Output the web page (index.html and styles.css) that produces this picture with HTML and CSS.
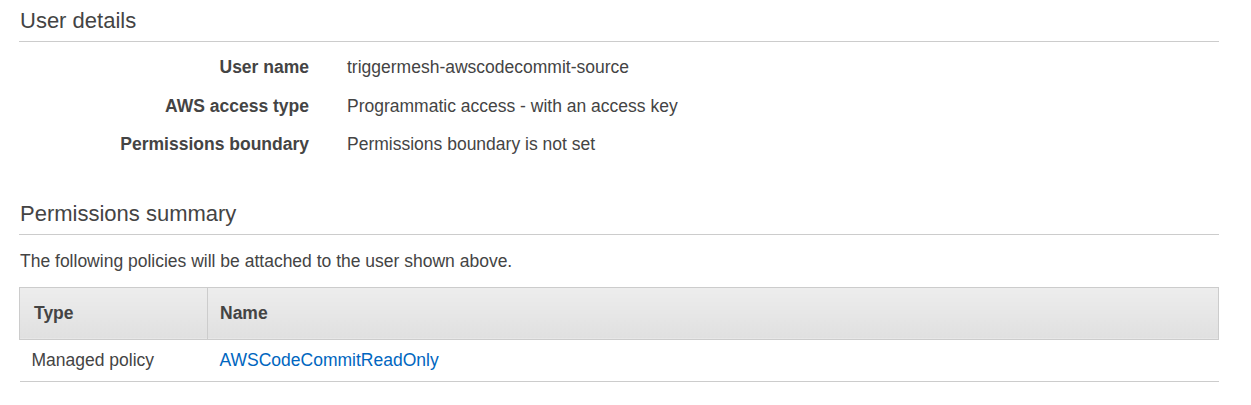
FILE: index.html
```html
<!DOCTYPE html>
<html lang="en">
<head>
<meta charset="utf-8">
<title>Review</title>
<link rel="stylesheet" href="styles.css">
</head>
<body>
<div class="page">
  <section class="section">
    <h2 class="section-title">User details</h2>
    <div class="details">
      <div class="detail-row">
        <div class="detail-label">User name</div>
        <div class="detail-value">triggermesh-awscodecommit-source</div>
      </div>
      <div class="detail-row">
        <div class="detail-label">AWS access type</div>
        <div class="detail-value">Programmatic access - with an access key</div>
      </div>
      <div class="detail-row">
        <div class="detail-label">Permissions boundary</div>
        <div class="detail-value">Permissions boundary is not set</div>
      </div>
    </div>
  </section>
  <section class="section section-summary">
    <h2 class="section-title">Permissions summary</h2>
    <p class="summary-text">The following policies will be attached to the user shown above.</p>
    <table class="policy-table">
      <thead>
        <tr>
          <th class="col-type">Type</th>
          <th class="col-name">Name</th>
        </tr>
      </thead>
      <tbody>
        <tr>
          <td class="col-type">Managed policy</td>
          <td class="col-name"><a class="policy-link" href="#">AWSCodeCommitReadOnly</a></td>
        </tr>
      </tbody>
    </table>
  </section>
</div>
</body>
</html>
```

FILE: styles.css
```css
* { box-sizing: border-box; }

html, body {
  margin: 0;
  padding: 0;
  background: #ffffff;
}

body {
  font-family: "Liberation Sans", Arial, sans-serif;
  font-size: 17.5px;
  color: #444444;
}

.page {
  padding: 0 32px 0 19px;
}

.section-title {
  margin: 0;
  padding: 7px 0 6px 1px;
  font-size: 22px;
  font-weight: normal;
  line-height: 28px;
  color: #444444;
  border-bottom: 1px solid #cccccc;
}

.details {
  margin-top: 6px;
}

.detail-row {
  display: flex;
  align-items: center;
  padding: 9px 0;
  line-height: 20.5px;
}

.detail-label {
  width: 290px;
  text-align: right;
  font-weight: bold;
  color: #444444;
}

.detail-value {
  margin-left: 38px;
  color: #444444;
}

.section-summary {
  margin-top: 29px;
}

.summary-text {
  margin: 16px 0 0 1px;
  line-height: 20px;
}

.policy-table {
  width: 100%;
  margin-top: 16px;
  border-collapse: collapse;
  font-size: 17.5px;
}

.policy-table th {
  height: 52px;
  text-align: left;
  font-weight: bold;
  color: #444444;
  background: linear-gradient(to bottom, #ededed, #e0e0e0);
  border: 1px solid #cccccc;
  padding: 0 12px;
}

.policy-table th.col-type {
  width: 188px;
  padding-left: 14px;
}

.policy-table td {
  height: 42px;
  padding: 0 12px;
  line-height: 20px;
  border-bottom: 1px solid #cccccc;
  color: #444444;
}

.policy-link {
  color: #0066c0;
  text-decoration: none;
}
```
